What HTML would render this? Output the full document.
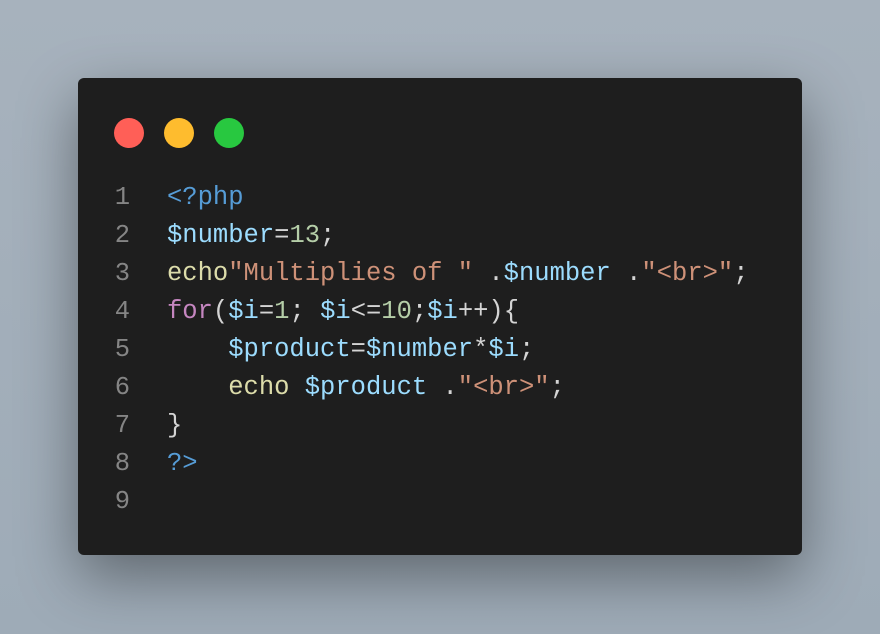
<!DOCTYPE html>
<html><head><meta charset="utf-8"><style>
html,body{margin:0;padding:0}
body{width:880px;height:634px;overflow:hidden;background:linear-gradient(180deg,#a7b2bd,#9eabb7);position:relative}
.card{position:absolute;left:78px;top:78px;width:724px;height:477px;background:#1e1e1e;border-radius:6px;box-shadow:0 22px 60px rgba(0,0,0,0.4)}
.dot{position:absolute;top:40px;width:30px;height:30px;border-radius:50%}
.code{position:absolute;left:0;top:101px;font-family:"Liberation Mono",monospace;font-size:25.5px;line-height:38px;white-space:pre;color:#d4d4d4}
.ln{position:absolute;left:0;width:52px;text-align:right;color:#858585}
.l{position:absolute;left:89px}
.t{color:#569cd6}.v{color:#9cdcfe}.n{color:#b5cea8}.f{color:#dcdcaa}.s{color:#ce9178}.k{color:#c586c0}
</style></head><body>
<div class="card">
<div class="dot" style="left:36px;background:#ff5f57"></div>
<div class="dot" style="left:86px;background:#febc2e"></div>
<div class="dot" style="left:136px;background:#28c840"></div>
<div class="code">
<div style="position:absolute;top:0"><span class="ln">1</span><span class="l"><span class="t">&lt;?php</span></span></div>
<div style="position:absolute;top:38px"><span class="ln">2</span><span class="l"><span class="v">$number</span>=<span class="n">13</span>;</span></div>
<div style="position:absolute;top:76px"><span class="ln">3</span><span class="l"><span class="f">echo</span><span class="s">"Multiplies of "</span> .<span class="v">$number</span> .<span class="s">"&lt;br&gt;"</span>;</span></div>
<div style="position:absolute;top:114px"><span class="ln">4</span><span class="l"><span class="k">for</span>(<span class="v">$i</span>=<span class="n">1</span>; <span class="v">$i</span>&lt;=<span class="n">10</span>;<span class="v">$i</span>++){</span></div>
<div style="position:absolute;top:152px"><span class="ln">5</span><span class="l">    <span class="v">$product</span>=<span class="v">$number</span>*<span class="v">$i</span>;</span></div>
<div style="position:absolute;top:190px"><span class="ln">6</span><span class="l">    <span class="f">echo</span> <span class="v">$product</span> .<span class="s">"&lt;br&gt;"</span>;</span></div>
<div style="position:absolute;top:228px"><span class="ln">7</span><span class="l">}</span></div>
<div style="position:absolute;top:266px"><span class="ln">8</span><span class="l"><span class="t">?&gt;</span></span></div>
<div style="position:absolute;top:304px"><span class="ln">9</span></div>
</div>
</div>
</body></html>
